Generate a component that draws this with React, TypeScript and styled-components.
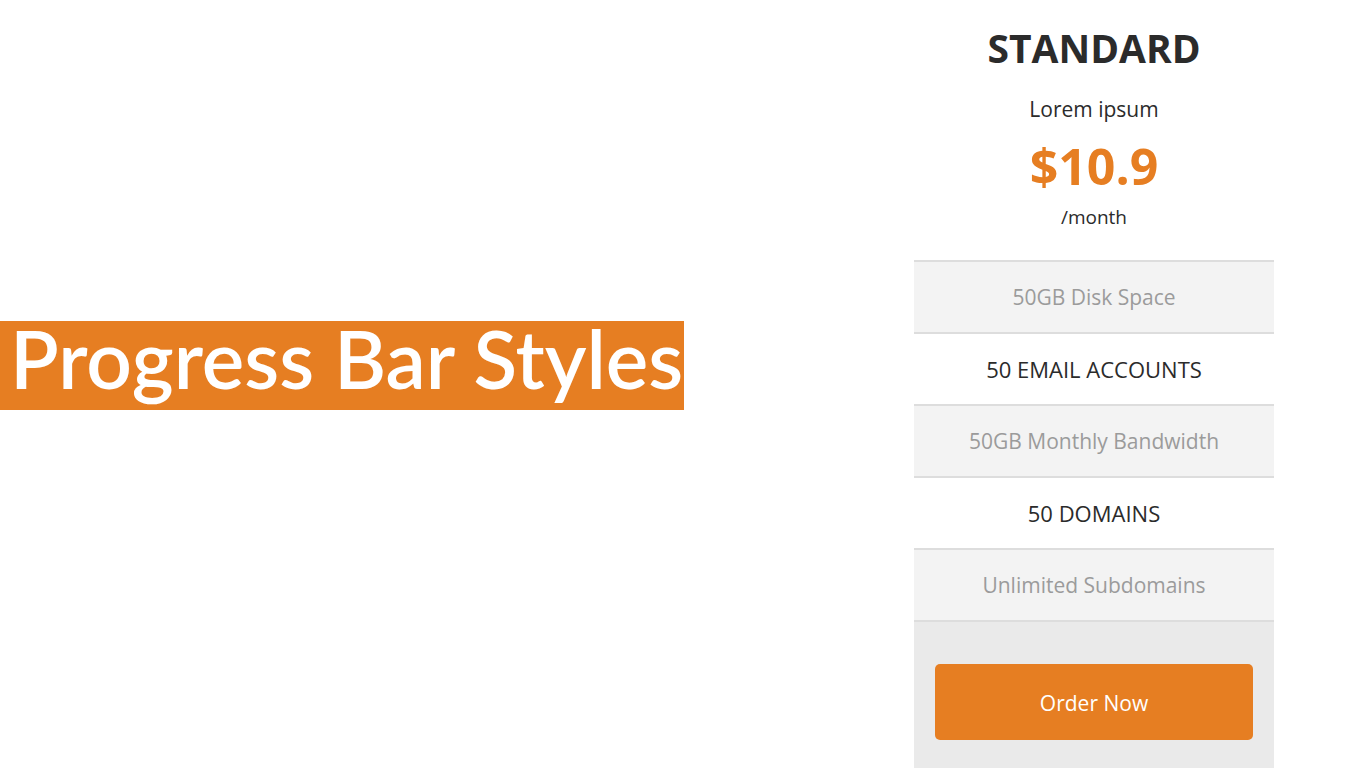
import React from "react";
import styled, { createGlobalStyle } from "styled-components";

const GlobalStyle = createGlobalStyle`
  * { box-sizing: border-box; }
  body {
    margin: 0;
    background: #fff;
    color: #2b2b2b;
    font-family: "Open Sans", "Noto Sans", sans-serif;
  }
  h1, h2, p, ul { margin: 0; padding: 0; }
`;

const Page = styled.main`
  display: flex;
  align-items: center;
  justify-content: space-between;
  min-height: 100vh;
`;

const Banner = styled.h1`
  min-width: 50%;
  margin-bottom: 37px;
  padding: 0 1px 15px 10px;
  background: #e67e22;
  color: #fff;
  font-family: Lato, sans-serif;
  font-size: 80px;
  font-weight: 600;
  line-height: 74px;
  white-space: nowrap;
`;

const Card = styled.section`
  display: flex;
  flex-direction: column;
  align-self: stretch;
  width: 360px;
  margin-right: 92px;
  text-align: center;
`;

const CardHeader = styled.header`
  padding: 19px 0 30px;
`;

const PlanName = styled.h2`
  font-size: 39px;
  font-weight: 700;
  line-height: 57px;
`;

const Tagline = styled.p`
  padding-top: 14px;
  font-size: 21px;
  line-height: 38px;
`;

const Price = styled.p`
  color: #e67e22;
  font-size: 50px;
  font-weight: 700;
  line-height: 76px;
`;

const Period = styled.p`
  font-size: 19px;
  line-height: 26px;
`;

const Features = styled.ul`
  list-style: none;
  border-bottom: 2px solid #ddd;
`;

const Feature = styled.li<{ $muted?: boolean }>`
  height: 72px;
  border-top: 2px solid #ddd;
  background: ${(p) => (p.$muted ? "#f3f3f3" : "#fff")};
  color: ${(p) => (p.$muted ? "#9b9b9b" : "#2b2b2b")};
  font-size: ${(p) => (p.$muted ? 21 : 22)}px;
  line-height: 70px;
`;

const CardFooter = styled.footer`
  flex: 1;
  padding: 42px 21px 28px;
  background: #eaeaea;
`;

const OrderButton = styled.button`
  width: 100%;
  height: 76px;
  padding: 2px 0 0;
  border: 0;
  border-radius: 5px;
  background: #e67e22;
  color: #fff;
  font-family: inherit;
  font-size: 21px;
  cursor: pointer;
`;

const features = [
  "50GB Disk Space",
  "50 EMAIL ACCOUNTS",
  "50GB Monthly Bandwidth",
  "50 DOMAINS",
  "Unlimited Subdomains",
];

export default function App() {
  return (
    <>
      <GlobalStyle />
      <Page>
        <Banner>Progress Bar Styles</Banner>
        <Card>
          <CardHeader>
            <PlanName>STANDARD</PlanName>
            <Tagline>Lorem ipsum</Tagline>
            <Price>$10.9</Price>
            <Period>/month</Period>
          </CardHeader>
          <Features>
            {features.map((feature, i) => (
              <Feature key={feature} $muted={i % 2 === 0}>{feature}</Feature>
            ))}
          </Features>
          <CardFooter>
            <OrderButton type="button">Order Now</OrderButton>
          </CardFooter>
        </Card>
      </Page>
    </>
  );
}
